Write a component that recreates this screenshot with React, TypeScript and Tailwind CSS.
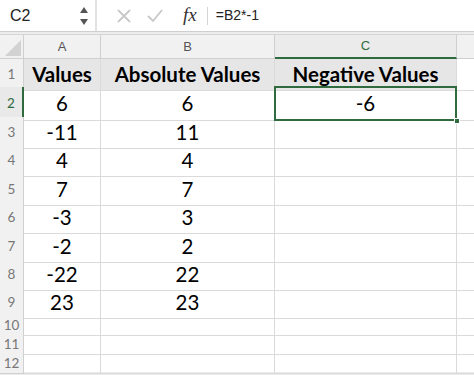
const rows: { h: string; a?: string; b?: string; c?: string }[] = [
  { h: 'h-[30px]', a: '6', b: '6', c: '-6' },
  { h: 'h-[28px]', a: '-11', b: '11' },
  { h: 'h-[29px]', a: '4', b: '4' },
  { h: 'h-[28px]', a: '7', b: '7' },
  { h: 'h-[29px]', a: '-3', b: '3' },
  { h: 'h-[28px]', a: '-2', b: '2' },
  { h: 'h-[28px]', a: '-22', b: '22' },
  { h: 'h-[28px]', a: '23', b: '23' },
  { h: 'h-[19px]' },
  { h: 'h-[19px]' },
  { h: 'h-[19px]' },
]

const cols = 'grid grid-cols-[24px_77px_174px_182px_1fr]'
const cell = 'border-r border-b border-[#dadada] flex items-center justify-center text-[20.5px] text-black'
const rowHead = 'border-r border-b border-[#d0d0d0] bg-[#f1f1f1] flex items-center justify-center text-[13.5px] text-[#777]'

export default function App() {
  return (
    <div className="w-[474px] h-[375px] overflow-hidden bg-white font-['Lato',sans-serif]">
      {/* formula bar */}
      <div className="flex items-center h-[32px] font-['Liberation_Sans',sans-serif] border-b border-[#cfcfcf]">
        <div className="w-[97px] h-full flex items-center justify-between pl-[10px] pr-[6px] border-r-[2px] border-[#e2e2e2]">
          <span className="text-[16px] text-[#222]">C2</span>
          <svg width="10" height="22" viewBox="0 0 10 22">
            <path d="M5 2 L9 8 L1 8 Z" fill="#555" />
            <path d="M5 20 L9 14 L1 14 Z" fill="#555" />
          </svg>
        </div>
        <div className="flex items-center h-full">
          <svg width="16" height="16" viewBox="0 0 16 16" className="ml-[19px]">
            <path d="M2 2 L14 14 M14 2 L2 14" stroke="#c8c8c8" strokeWidth="1.8" />
          </svg>
          <svg width="18" height="16" viewBox="0 0 18 16" className="ml-[14px]">
            <path d="M2 8 L7 13 L16 2" stroke="#c8c8c8" strokeWidth="1.8" fill="none" />
          </svg>
          <span className="ml-[19px] text-[19px] italic text-[#333] font-['Liberation_Serif',serif]">fx</span>
          <div className="ml-[10px] w-[1px] h-[18px] bg-[#d4d4d4]" />
          <span className="ml-[8px] text-[14px] text-[#222]">=B2*-1</span>
        </div>
      </div>
      <div className="h-[3px] bg-[#ececec] border-b border-[#d6d6d6]" />

      {/* column headers */}
      <div className={`${cols} h-[24px] font-['Liberation_Sans',sans-serif] text-[13px] text-[#555]`}>
        <div className="relative border-r border-b border-[#cfcfcf] bg-[#f1f1f1] overflow-hidden">
          <svg width="24" height="24" viewBox="0 0 24 24" className="absolute inset-0">
            <path d="M21 5 L21 21 L5 21 Z" fill="#d2d2d2" />
          </svg>
        </div>
        <div className="border-r border-b border-[#cfcfcf] bg-[#f1f1f1] flex items-center justify-center">A</div>
        <div className="border-r border-b border-[#cfcfcf] bg-[#f1f1f1] flex items-center justify-center">B</div>
        <div className="border-r border-b-[2px] border-r-[#cfcfcf] border-b-[#2f6b3f] bg-[#ebebeb] flex items-center justify-center text-[#2f6b3f]">C</div>
        <div className="border-b border-[#cfcfcf] bg-[#f1f1f1]" />
      </div>

      {/* row 1 */}
      <div className={`${cols} h-[28px]`}>
        <div className={rowHead}>1</div>
        <div className={`${cell} bg-[#e7e6e6] font-bold`}>Values</div>
        <div className={`${cell} bg-[#e7e6e6] font-bold`}>Absolute Values</div>
        <div className={`${cell} bg-[#e7e6e6] font-bold`}>Negative Values</div>
        <div className="border-b border-[#dadada]" />
      </div>

      {rows.map((r, i) => (
        <div key={i} className={`${cols} ${r.h}`}>
          {i === 0 ? (
            <div className="border-r-[2px] border-b border-r-[#2f6b3f] border-b-[#d0d0d0] bg-[#e9e9e9] flex items-center justify-center text-[13.5px] text-[#2f6b3f]">2</div>
          ) : (
            <div className={rowHead}>{i + 2}</div>
          )}
          <div className={cell}>{r.a}</div>
          <div className={cell}>{r.b}</div>
          {i === 0 ? (
            <div className="relative border-[2px] border-[#2f6b3f] flex items-center justify-center text-[20.5px] text-black -ml-[1px] -mt-[1px]">
              {r.c}
              <div className="absolute -right-[5px] -bottom-[5px] w-[6px] h-[6px] bg-[#2f6b3f] border border-white" />
            </div>
          ) : (
            <div className={cell}>{r.c}</div>
          )}
          <div className="border-b border-[#dadada]" />
        </div>
      ))}
      <div className="h-[3px] bg-[#ececec]" />
    </div>
  )
}
